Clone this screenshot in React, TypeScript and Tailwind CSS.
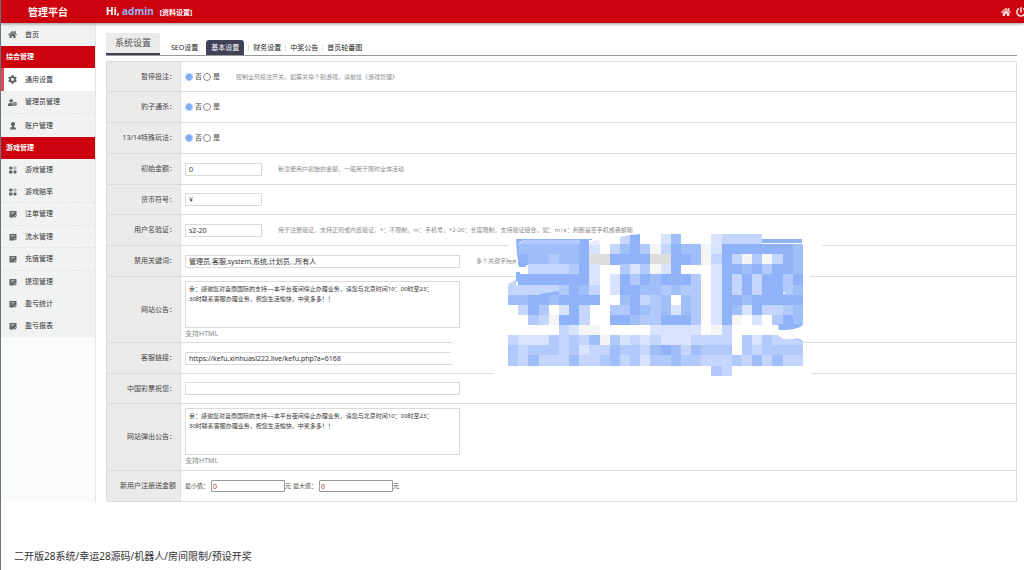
import React, { useState } from 'react';
import { FaHome, FaCog, FaUserCog, FaPowerOff } from 'react-icons/fa';

interface MenuItem {
  label: string;
  icon: React.ReactNode;
  height: string;
  active?: boolean;
  divider?: boolean;
}

const UserIcon = () => (
  <svg className="w-2 h-2" viewBox="0 0 16 16" fill="currentColor">
    <path d="M8 0a4 4 0 0 0-4 4c0 2 1 3.600 2 4.400V10L3 11l-1 4h12l-1-4-3-1V8.400C11 7.600 12 6 12 4a4 4 0 0 0-4-4z" />
  </svg>
);

const GamesIcon = () => (
  <svg className="w-2 h-2" viewBox="0 0 16 16" fill="currentColor">
    <rect x="0" y="1" width="7" height="6" rx="3" />
    <circle cx="12" cy="4" r="2.500" fill="none" stroke="currentColor" strokeWidth="1.200" />
    <rect x="0" y="9" width="7" height="6" rx="2" />
    <rect x="9" y="9" width="6" height="6" rx="2" />
  </svg>
);

const FormIcon = () => (
  <svg className="w-2 h-2" viewBox="0 0 16 16" fill="currentColor">
    <path d="M1 2h14v7l-5 6H1z" />
    <path d="M4 5h8M4 8h5" stroke="#f1f3f2" strokeWidth="1" />
    <path d="M15 9l-6 6h4l3-3z" stroke="#f1f3f2" strokeWidth="1" />
  </svg>
);

const menuGroups: { title?: string; items: MenuItem[] }[] = [
  {
    items: [{ label: '首页', icon: <FaHome className="w-[9px] h-[9px]" />, height: 'h-[23px]' }],
  },
  {
    title: '综合管理',
    items: [
      { label: '通用设置', icon: <FaCog className="w-[9px] h-[9px]" />, height: 'h-[23px]', active: true },
      { label: '管理员管理', icon: <FaUserCog className="w-[9px] h-[9px]" />, height: 'h-[23px]', divider: true },
      { label: '账户管理', icon: <UserIcon />, height: 'h-[23px]' },
    ],
  },
  {
    title: '游戏管理',
    items: [
      { label: '游戏管理', icon: <GamesIcon />, height: 'h-[22px]' },
      { label: '游戏赔率', icon: <GamesIcon />, height: 'h-[22px]', divider: true },
      { label: '注单管理', icon: <FormIcon />, height: 'h-[23px]', divider: true },
      { label: '流水管理', icon: <FormIcon />, height: 'h-[22px]', divider: true },
      { label: '充值管理', icon: <FormIcon />, height: 'h-[23px]', divider: true },
      { label: '提现管理', icon: <FormIcon />, height: 'h-[22px]' },
      { label: '盈亏统计', icon: <FormIcon />, height: 'h-[22px]' },
      { label: '盈亏报表', icon: <FormIcon />, height: 'h-[22px]' },
    ],
  },
];

const tabs = ['SEO设置', '基本设置', '财务设置', '中奖公告', '首页轮番图'];

const notice =
  '亲：感谢您对蓝鼎国际的支持~~本平台夜间停止办理业务，请您与北京时间10：00时至23：\n30时联系客服办理业务，祝您生活愉快，中奖多多！！';

interface RowProps {
  label: string;
  htmlFor?: string;
  height?: string;
  children: React.ReactNode;
}

const Row: React.FC<RowProps> = ({ label, htmlFor, height = 'h-[31px]', children }) => (
  <div className={`flex border-b border-[#dcdcdc] ${height}`}>
    <div className="w-[74px] shrink-0 flex items-center justify-end pr-1 bg-[#ebebeb] border-r border-[#dcdcdc]">
      <label htmlFor={htmlFor} className="whitespace-nowrap">{label}</label>
    </div>
    <div className="flex-1 min-w-0 pl-1 flex items-center">{children}</div>
  </div>
);

const Hint: React.FC<{ children: React.ReactNode }> = ({ children }) => (
  <span className="ml-4 text-[6px] whitespace-nowrap text-[#8c8c8c]">{children}</span>
);

const YesNo: React.FC<{ name: string; label: string }> = ({ name, label }) => {
  const [value, setValue] = useState('否');
  return (
    <div role="radiogroup" aria-label={label} className="flex items-center gap-px">
      {['否', '是'].map(option => (
        <label key={option} className="flex items-center gap-[2px]">
          <input
            type="radio"
            name={name}
            checked={value === option}
            onChange={() => setValue(option)}
            className="appearance-none w-2 h-2 rounded-full border border-[#8a8a8a] bg-white checked:border-[#a9c6fa] checked:bg-[#7faaf6]"
          />
          {option}
        </label>
      ))}
    </div>
  );
};

const TextField: React.FC<{ id: string; value?: string; wide?: boolean }> = ({ id, value = '', wide }) => (
  <input
    id={id}
    type="text"
    defaultValue={value}
    className={`h-[13px] px-[3px] border border-[#dadada] bg-white text-[#333] ${wide ? 'w-[275px]' : 'w-[77px]'}`}
  />
);

const NoticeField: React.FC<{ id: string }> = ({ id }) => (
  <div className="self-start pt-[4px]">
    <textarea
      id={id}
      defaultValue={notice}
      className="block w-[275px] h-[47px] px-[3px] py-[2px] resize-none overflow-hidden border border-[#dadada] bg-white text-[6px] leading-[10px] text-[#333]"
    />
    <p className="text-[7px] leading-[12px] text-[#888]">支持HTML</p>
  </div>
);

const AmountField: React.FC<{ id: string; label: string }> = ({ id, label }) => (
  <div className="flex items-center text-[6px]">
    <label htmlFor={id} className="mr-[2px]">{label}</label>
    <input
      id={id}
      type="text"
      defaultValue="0"
      className="w-[74px] h-3 px-px border border-[#999] rounded-[1px] text-[7px] text-[#a33]"
    />
    <span>元</span>
  </div>
);

const shades: { [key: string]: string } = {
  '1': '#f4f5f5',
  '2': '#d8e4fe',
  '3': '#c4d6fd',
  '4': '#b1cafb',
  '5': '#a0bff9',
  '6': '#8fb2f8',
  g: '#dcdddf',
};

const mosaic = [
  '00000000000000025000233330000',
  '05555556203564136551266666665',
  '06554556gg6666gg6651363141365',
  '00333346200424126000266564665',
  '06666666202646566640263636646',
  '33333465302665545440263636645',
  '55665666600563450540266566666',
  '03640263004465452540265263345',
  '00431663006654466640261020465',
  '00000321100000222220130000000',
  '32224343514232322233330424333',
  '43444342335443565354440434444',
  '43533353345342445443334353533',
  '00000000000000000000430000000',
];

const Mosaic = () => (
  <svg className="absolute left-[449px] top-[234px] w-[372px] h-[143px] pointer-events-none" viewBox="0 0 372 143">
    <path d="M58 6L90 0H352V6H372V19H364V39H360V66H353V133H362V143H44V136H4Q-4 110 8 103H26V52H66V26H58z" fill="#fff" />
    <g transform="translate(58 0) scale(10.170 10.120)" shapeRendering="crispEdges">
      {mosaic.map((line, y) =>
        line.split('').map((cell, x) =>
          cell === '0' ? null : <rect key={`${x}-${y}`} x={x} y={y} width="1.020" height="1.020" fill={shades[cell]} />
        )
      )}
    </g>
    {/* strokes that the grid does not cover */}
    <path d="M66 5H142V6H78Q70 6 69 10V30L76 31V33H69L67 20z" fill="#8fb2f8" />
    <path d="M70 10Q70 6 78 6H139V10z" fill="#b1cafb" />
    <path d="M130 6H139V11H130z" fill="#8fb2f8" />
    <path d="M140 9Q142 6 149 6V11H140z" fill="#e3ebfe" />
    <path d="M66 38H70V46L66 48z" fill="#8fb2f8" />
    <path d="M58 50L66 46V51H58z" fill="#c4d6fd" />
    <path d="M90 60L109 57V61H90z" fill="#8fb2f8" />
    <path d="M170 3L180 1V10H170z" fill="#c4d6fd" />
    <path d="M180 1L190 0V10H180z" fill="#8fb2f8" />
    <path d="M312 5H352V9H312z" fill="#8fb2f8" />
    <path d="M328 90H353Q350 96 329 96z" fill="#8fb2f8" />
    <path d="M320 100H354V107L345 105H333L328 101z" fill="#fff" />
    <path d="M343 105Q350 103 353 108Q348 105 343 105z" fill="#8fb2f8" />
    <circle cx="334" cy="59" r="1" fill="#fff" />
  </svg>
);

const App: React.FC = () => {
  const [activeTab, setActiveTab] = useState('基本设置');

  return (
    <div
      className={`relative min-h-screen overflow-hidden border-l border-[#6c737d] bg-white text-[7px] leading-[10px] text-[#444] font-['Noto_Sans','Noto_Sans_CJK_SC',sans-serif]`}
    >
      <header className="relative z-10 h-[23px] flex items-center bg-[#cc020e] text-white shadow-[0_1px_3px_rgba(0,0,0,0.4)]">
        <h1 className="w-[94px] text-center text-[10px] font-bold">管理平台</h1>
        <div className="ml-[11px] flex items-baseline gap-[6px] font-bold">
          <span className="text-[10px]">
            Hi, <span className="text-[#8fb5f8]">admin</span>
          </span>
          <a href="#profile">[资料设置]</a>
        </div>
        <div className="ml-auto -mr-[2px] flex items-center gap-[5px] text-[#f7dcdc]">
          <a href="#home" aria-label="首页"><FaHome className="w-[10px] h-[10px]" /></a>
          <a href="#logout" aria-label="退出"><FaPowerOff className="w-[10px] h-[10px]" /></a>
        </div>
      </header>

      <div className="flex">
        {/* Sidebar */}
        <aside className="w-[95px] shrink-0 border-r border-[#e3e6e5] bg-[#fafcfb]">
          {menuGroups.map((group, index) => (
            <nav key={index} className="bg-[#f1f3f2]">
              {group.title && (
                <h2 className="h-[22px] pl-[5px] flex items-center bg-[#cc020e] text-white font-bold">{group.title}</h2>
              )}
              {group.items.map(item => (
                <a
                  key={item.label}
                  href="#menu"
                  className={`flex items-center gap-2 pl-[7px] text-[#333] ${item.height} ${
                    item.active ? 'bg-white shadow-[inset_3px_0_0_#dd4a50]' : ''
                  } ${item.divider ? 'border-b border-dashed border-[#e2e4e3]' : ''}`}
                >
                  <span className="w-[9px] flex justify-center text-[#5f6668]">{item.icon}</span>
                  {item.label}
                </a>
              ))}
            </nav>
          ))}
        </aside>

        <main className="flex-1 min-w-0 pl-[10px] pr-[7px] pt-[10px]">
          {/* Tabs */}
          <div className="flex items-end border-b border-[#999]">
            <h2 className="w-[54px] h-[22px] flex items-center justify-center bg-[#ebebeb] border-b-2 border-[#404258] text-[9px] text-[#555]">
              系统设置
            </h2>
            <div className="ml-[7px] flex items-center">
              {tabs.map((tab, index) => (
                <React.Fragment key={tab}>
                  {index > 1 && <span className="w-px h-[6px] bg-[#ddd]" />}
                  <button
                    type="button"
                    onClick={() => setActiveTab(tab)}
                    className={`h-[15px] whitespace-nowrap ${
                      tab === activeTab
                        ? 'mx-[4px] px-[5px] rounded-t-[3px] bg-[#404258] text-white'
                        : 'px-[4px] text-[#222]'
                    }`}
                  >
                    {tab}
                  </button>
                </React.Fragment>
              ))}
            </div>
          </div>

          <form className="mt-[5px] border-t border-x border-[#dcdcdc]">
            <Row label="暂停投注：" height="h-[30px]">
              <YesNo name="pause" label="暂停投注" />
              <Hint>控制全局投注开关，如需关停个别游戏，请前往《游戏管理》</Hint>
            </Row>
            <Row label="豹子通杀：">
              <YesNo name="leopard" label="豹子通杀" />
            </Row>
            <Row label="13/14特殊玩法：">
              <YesNo name="special" label="13/14特殊玩法" />
            </Row>
            <Row label="初始金额：" htmlFor="amount">
              <TextField id="amount" value="0" />
              <Hint>新注册用户初始的金额，一般用于限时全体活动</Hint>
            </Row>
            <Row label="货币符号：" htmlFor="currency" height="h-[30px]">
              <TextField id="currency" value="¥" />
            </Row>
            <Row label="用户名验证：" htmlFor="username">
              <TextField id="username" value="s2-20" />
              <Hint>
                用于注册验证，支持正则或内置验证，*：不限制，m：手机号，*2-20：长度限制，支持验证组合，如：m|e：判断是否手机或者邮箱
              </Hint>
            </Row>
            <Row label="禁用关键词：" htmlFor="keywords">
              <TextField id="keywords" value="管理员,客服,system,系统,计划员, ,所有人" wide />
              <Hint>多个关键字用用</Hint>
            </Row>
            <Row label="网站公告：" htmlFor="notice" height="h-[66px]">
              <NoticeField id="notice" />
            </Row>
            <Row label="客服链接：" htmlFor="service">
              <TextField id="service" value="https://kefu.xinhuasl222.live/kefu.php?a=6168" wide />
            </Row>
            <Row label="中国彩票祝您：" htmlFor="lottery" height="h-[30px]">
              <TextField id="lottery" wide />
            </Row>
            <Row label="网站弹出公告：" htmlFor="popup" height="h-[67px]">
              <NoticeField id="popup" />
            </Row>
            <Row label="新用户注册送金额" htmlFor="min">
              <div className="flex gap-[2px]">
                <AmountField id="min" label="最小值：" />
                <AmountField id="max" label="最大值：" />
              </div>
            </Row>
          </form>
        </main>
      </div>

      <Mosaic />

      <p className="mt-[46px] ml-[13px] text-[10px] leading-[16px] text-[#333]">
        二开版28系统/幸运28源码/机器人/房间限制/预设开奖
      </p>
    </div>
  );
};

export default App;
